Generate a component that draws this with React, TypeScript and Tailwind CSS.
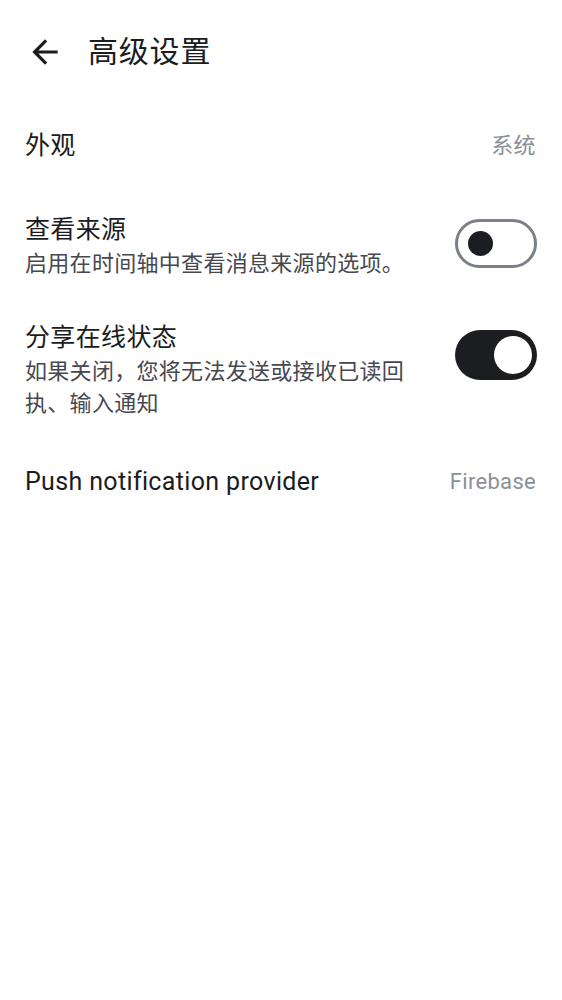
import React from "react";

const font = { fontFamily: "Roboto, 'Noto Sans CJK SC', 'Noto Sans', sans-serif" };

function Toggle({ on }: { on: boolean }) {
  if (on) {
    return (
      <div className="w-[82px] h-[50px] rounded-full bg-[#1c1d21] flex items-center justify-end pr-[5px] shrink-0">
        <div className="w-[38px] h-[38px] rounded-full bg-white" />
      </div>
    );
  }
  return (
    <div className="w-[82px] h-[49px] rounded-full border-[3px] border-[#7c8088] bg-white flex items-center pl-[10px] shrink-0">
      <div className="w-[25px] h-[25px] rounded-full bg-[#1c1d21]" />
    </div>
  );
}

export default function App() {
  return (
    <div className="w-[562px] h-[1000px] bg-white text-[#1b1c20]" style={font}>
      <div className="h-[104px] flex items-center">
        <div className="w-[88px] flex items-center pl-[26px]">
          <svg width="38" height="38" viewBox="0 0 24 24" fill="#1b1c20">
            <path d="M20 11H7.83l5.59-5.59L12 4l-8 8 8 8 1.41-1.41L7.83 13H20v-2z" />
          </svg>
        </div>
        <div className="text-[30px] leading-[40px] tracking-[0.8px]">高级设置</div>
      </div>

      <div className="mt-[4px] flex items-center justify-between pl-[25px] pr-[26px] py-[20px]">
        <div className="text-[25px] leading-[36px] tracking-[0.35px]">外观</div>
        <div className="text-[22px] leading-[32px] tracking-[0.4px] text-[#8b8f97]">系统</div>
      </div>

      <div className="mt-[8px] flex items-start justify-between pl-[25px] pr-[25px] py-[20px]">
        <div className="flex flex-col">
          <div className="text-[25px] leading-[36px] tracking-[0.35px]">查看来源</div>
          <div className="text-[22px] leading-[32px] tracking-[0.3px] text-[#47484f]">启用在时间轴中查看消息来源的选项。</div>
        </div>
        <div className="mt-[7px]">
          <Toggle on={false} />
        </div>
      </div>

      <div className="flex items-start justify-between pl-[25px] pr-[25px] py-[20px]">
        <div className="flex flex-col w-[392px]">
          <div className="text-[25px] leading-[36px] tracking-[0.35px]">分享在线状态</div>
          <div className="text-[22px] leading-[32px] tracking-[0.3px] text-[#47484f]">如果关闭，您将无法发送或接收已读回执、输入通知</div>
        </div>
        <div className="mt-[10px]">
          <Toggle on={true} />
        </div>
      </div>

      <div className="mt-[4px] flex items-center justify-between pl-[25px] pr-[26px] py-[20px]">
        <div className="text-[25px] leading-[36px] tracking-[0.35px]">Push notification provider</div>
        <div className="text-[22px] leading-[32px] tracking-[0.3px] text-[#8b8f97]">Firebase</div>
      </div>
    </div>
  );
}
